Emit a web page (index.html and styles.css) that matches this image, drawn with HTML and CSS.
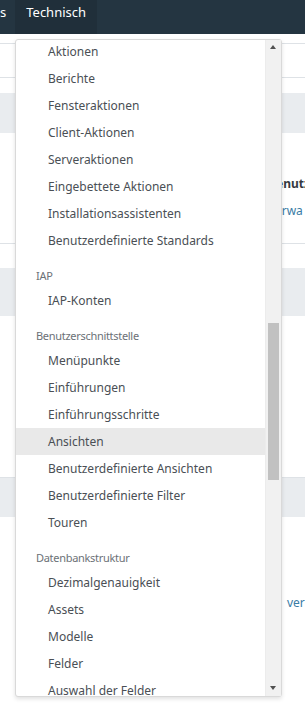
FILE: index.html
```html
<!DOCTYPE html>
<html>
<head>
  <title>Technisch</title>
  <meta charset="UTF-8">
  <link rel="stylesheet" href="styles.css">
</head>
<body>
<nav class="navbar">
  <span class="nav-item">s</span>
  <span class="nav-item active">Technisch</span>
</nav>

<div class="page">
  <div class="row gap-top"></div>
  <div class="row panel"></div>
  <div class="row spacer-16"></div>
  <div class="row band band-40"></div>
  <div class="row block-111">
    <div class="side-text">
      <b class="label">Benutz</b>
      <span class="link">Verwa</span>
    </div>
  </div>
  <div class="row spacer-25"></div>
  <div class="row band band-48"></div>
  <div class="row block-160"></div>
  <div class="row band band-39"></div>
  <div class="row block-rest">
    <span class="link link-low">ver</span>
  </div>
</div>

<div class="dropdown">
  <div class="menu-list">
    <div class="menu-scroll">
      <a class="item">Aktionen</a>
      <a class="item">Berichte</a>
      <a class="item">Fensteraktionen</a>
      <a class="item">Client-Aktionen</a>
      <a class="item">Serveraktionen</a>
      <a class="item">Eingebettete Aktionen</a>
      <a class="item">Installationsassistenten</a>
      <a class="item">Benutzerdefinierte Standards</a>

      <div class="header">IAP</div>
      <a class="item">IAP-Konten</a>

      <div class="header">Benutzerschnittstelle</div>
      <a class="item">Menüpunkte</a>
      <a class="item">Einführungen</a>
      <a class="item">Einführungsschritte</a>
      <a class="item hover">Ansichten</a>
      <a class="item">Benutzerdefinierte Ansichten</a>
      <a class="item">Benutzerdefinierte Filter</a>
      <a class="item">Touren</a>

      <div class="header">Datenbankstruktur</div>
      <a class="item">Dezimalgenauigkeit</a>
      <a class="item">Assets</a>
      <a class="item">Modelle</a>
      <a class="item">Felder</a>
      <a class="item">Auswahl der Felder</a>
    </div>
  </div>
  <div class="scrollbar">
    <span class="arrow up"></span>
    <span class="thumb"></span>
    <span class="arrow down"></span>
  </div>
</div>
</body>
</html>
```

FILE: styles.css
```css
body {
  margin: 0; font-family: "Noto Sans", "DejaVu Sans", sans-serif;
  font-size: 12px; color: #4a4f55; background: #fff;
  width: 305px; height: 716px; overflow: hidden;
}

/* top bar */
.navbar {
  display: flex; height: 34px; background: #243541;
}
.nav-item {
  color: #fff; font-size: 13px; line-height: 24px; padding: 0 9px 0 0;
}
.nav-item.active {
  background: #202f3a; padding: 0 11px;
}

/* page behind the menu */
.row { border-bottom: 1px solid transparent; }
.gap-top { height: 9px; border-bottom: 1px solid #dee2e6; }
.panel { height: 33px; border-bottom: 1px solid #dee2e6; }
.spacer-16 { height: 15px; border: 0; }
.band { background: #e9ecef; border: 0; }
.band-40 { height: 40px; }
.block-111 { height: 110px; border-bottom: 1px solid #dee2e6; }
.spacer-25 { height: 24px; border: 0; }
.band-48 { height: 48px; }
.block-160 { height: 161px; border-bottom: 1px solid #dee2e6; }
.band-39 { height: 39px; }
.block-rest { height: 198px; border: 0; }

.side-text {
  display: flex; flex-direction: column; gap: 10px;
  padding: 42px 0 0 268px; white-space: nowrap;
}
.label { color: #343a40; font-weight: bold; }
.link { color: #3a7ca5; }
.link-low { display: block; padding: 77px 0 0 287px; }

/* dropdown menu */
.dropdown {
  position: absolute; left: 15px; top: 39px;
  width: 265px; height: 656px;
  display: flex; background: #fff;
  border: 1px solid #d9d9d9; border-radius: 3px;
  box-shadow: 0 2px 4px rgba(0,0,0,0.12);
}
.menu-list { flex: 1; overflow: hidden; }
.menu-scroll { margin-top: -2px; }
.item {
  display: block; height: 27px; line-height: 27px;
  padding-left: 32px; white-space: nowrap; color: #4a4f55;
}
.item.hover { background: #e9e9e9; }
.header {
  margin-top: 10px; height: 23px; line-height: 23px;
  padding-left: 20px; font-size: 11px; letter-spacing: -0.3px; color: #6c7177;
}

.scrollbar {
  width: 15px; background: #f1f1f1; position: relative;
  border-left: 1px solid #ececec;
}
.arrow {
  position: absolute; left: 4px;
  border-left: 3.5px solid transparent; border-right: 3.5px solid transparent;
}
.arrow.up { top: 5px; border-bottom: 4px solid #505050; }
.arrow.down { bottom: 6px; border-top: 4px solid #505050; }
.thumb {
  position: absolute; left: 2px; top: 283px;
  width: 11px; height: 157px; background: #c1c1c1;
}
```
